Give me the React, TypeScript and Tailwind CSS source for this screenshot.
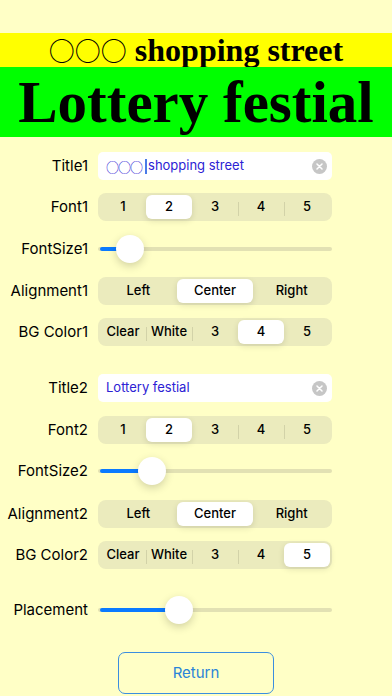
import React from 'react';

const sans = { fontFamily: 'Inter, "Noto Sans", sans-serif' };
const cjk = { fontFamily: '"Noto Sans CJK JP", sans-serif' };

const Segmented = ({ items, selected }: { items: string[]; selected: number }) => (
  <div className="flex h-[28px] w-[234px] items-center rounded-[8px] bg-[#ebebbd] p-[2px]">
    {items.map((item, i) => {
      const showSep = i > 0 && i !== selected && i - 1 !== selected;
      return (
        <div key={item} className="relative flex h-full flex-1 items-center justify-center">
          {showSep && <div className="absolute left-0 top-[7px] h-[14px] w-px bg-[#d2d2a8]" />}
          <div
            className={
              'flex h-full w-full items-center justify-center rounded-[6px] text-[13px] font-medium text-black ' +
              (i === selected ? 'bg-white shadow-[0_2px_6px_rgba(0,0,0,0.12)]' : '')
            }
          >
            {item}
          </div>
        </div>
      );
    })}
  </div>
);

const Slider = ({ value }: { value: number }) => (
  <div className="relative flex h-[28px] w-[234px] items-center">
    <div className="h-[4px] w-full rounded-full bg-[#e2e1b3]" />
    <div className="absolute left-[2px] h-[4px] rounded-full bg-[#0a7aff]" style={{ width: value }} />
    <div
      className="absolute top-0 h-[28px] w-[28px] rounded-full bg-white shadow-[0_3px_8px_rgba(0,0,0,0.18)]"
      style={{ left: value - 12 }}
    />
  </div>
);

const TextBox = ({ children }: { children: React.ReactNode }) => (
  <div className="flex h-[28px] w-[234px] items-center rounded-[5px] bg-white pl-[8px] pr-[5px]">
    <div className="flex flex-1 items-center text-[13px] text-[#2c22d4]">{children}</div>
    <div className="flex h-[15px] w-[15px] items-center justify-center rounded-full bg-[#c6c6c6]">
      <svg width="7" height="7" viewBox="0 0 7 7">
        <path d="M1 1L6 6M6 1L1 6" stroke="white" strokeWidth="1.5" strokeLinecap="round" />
      </svg>
    </div>
  </div>
);

const Row = ({ label, children, className }: { label: string; children: React.ReactNode; className?: string }) => (
  <div className={'flex items-center ' + (className || '')}>
    <div className="w-[88px] text-right text-[15px] text-black">{label}</div>
    <div className="ml-[10px]">{children}</div>
  </div>
);

export default function App() {
  return (
    <div className="flex h-[696px] w-[392px] flex-col bg-[#ffffc6]" style={sans}>
      <div className="h-[33px]" />
      <div
        className="flex h-[34px] items-center justify-center bg-[#ffff00] text-[32px] font-bold leading-none text-black"
        style={{ fontFamily: '"Liberation Serif", serif' }}
      >
        <span className="text-[26px] font-normal" style={cjk}>○○○</span>
        <span>&nbsp;shopping street</span>
      </div>
      <div
        className="flex h-[70px] items-center justify-center bg-[#00ff00] text-[59px] font-bold leading-none text-black"
        style={{ fontFamily: '"Liberation Serif", serif' }}
      >
        Lottery festial
      </div>

      <Row label="Title1" className="mt-[15px]">
        <TextBox>
          <span className="text-[13px] leading-none tracking-[-1px]" style={cjk}>○○○</span>
          <span className="ml-[3px] mr-[1px] inline-block h-[15px] w-[2px] bg-[#4a7be8]" />
          <span>shopping street</span>
        </TextBox>
      </Row>
      <Row label="Font1" className="mt-[13px]">
        <Segmented items={['1', '2', '3', '4', '5']} selected={1} />
      </Row>
      <Row label="FontSize1" className="mt-[14px]">
        <Slider value={30} />
      </Row>
      <Row label="Alignment1" className="mt-[14px]">
        <Segmented items={['Left', 'Center', 'Right']} selected={1} />
      </Row>
      <Row label="BG Color1" className="mt-[13px]">
        <Segmented items={['Clear', 'White', '3', '4', '5']} selected={3} />
      </Row>

      <Row label="Title2" className="mt-[28px]">
        <TextBox>
          <span>Lottery festial</span>
        </TextBox>
      </Row>
      <Row label="Font2" className="mt-[14px]">
        <Segmented items={['1', '2', '3', '4', '5']} selected={1} />
      </Row>
      <Row label="FontSize2" className="mt-[13px]">
        <Slider value={52} />
      </Row>
      <Row label="Alignment2" className="mt-[15px]">
        <Segmented items={['Left', 'Center', 'Right']} selected={1} />
      </Row>
      <Row label="BG Color2" className="mt-[13px]">
        <Segmented items={['Clear', 'White', '3', '4', '5']} selected={4} />
      </Row>

      <Row label="Placement" className="mt-[27px]">
        <Slider value={79} />
      </Row>

      <div className="mt-[28px] flex justify-center">
        <button className="flex h-[42px] w-[156px] items-center justify-center rounded-[7px] border-[1.5px] border-[#3a8ee0] text-[15px] text-[#2a84d8]">
          Return
        </button>
      </div>
    </div>
  );
}
